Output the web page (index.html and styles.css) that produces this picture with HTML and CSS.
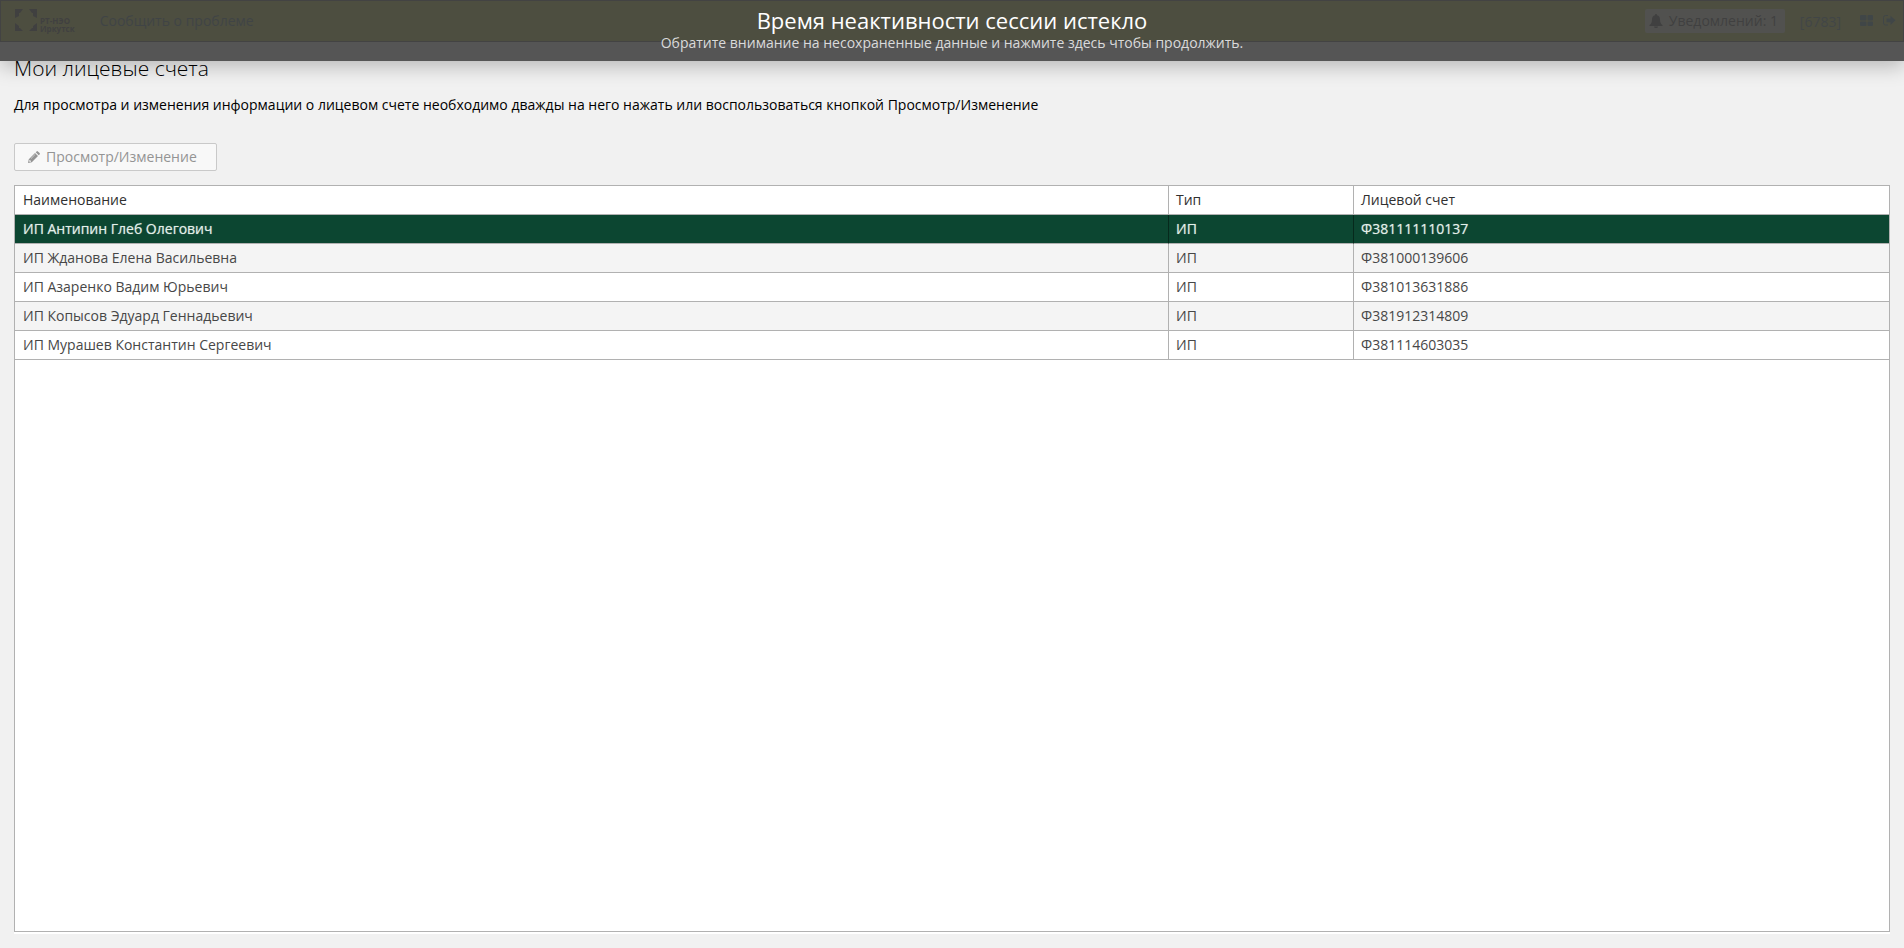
FILE: index.html
```html
<!DOCTYPE html>
<html lang="ru">
<head>
<meta charset="utf-8">
<title>Мои лицевые счета</title>
<link rel="stylesheet" href="styles.css">
</head>
<body>
<header class="topbar">
  <svg class="logo-mark" viewBox="0 0 22 23" width="22" height="23" aria-hidden="true">
    <path d="M0 0H8L5 4H4V7L0 9ZM14 0H22V9L18 7V4H17ZM0 14L4 17V19H5L8 22H0ZM22 14V22H14L17 19H18V17Z" fill="currentColor"/>
  </svg>
  <div class="logo-text"><span>РТ-НЭО</span><span>Иркутск</span></div>
  <a class="report" href="#report">Сообщить о проблеме</a>
  <button class="notices" type="button">
    <svg viewBox="0 0 14 14" width="14" height="14" aria-hidden="true"><path d="M7 0a1 1 0 0 1 1 1.200C10.200 1.700 11 3.500 11 5.500C11 8.500 12 10 13.500 11V12H.5V11C2 10 3 8.500 3 5.500C3 3.500 3.800 1.700 6 1.200A1 1 0 0 1 7 0ZM5 12.500H9A2 1.500 0 0 1 5 12.500Z" fill="currentColor"/></svg>
    <span>Уведомлений: 1</span>
  </button>
  <span class="code">[6783]</span>
  <button class="icon-button apps" type="button" aria-label="Приложения">
    <svg viewBox="0 0 14 12" width="14" height="12"><path d="M1 0H5.500Q6.500 0 6.500 1V4.500Q6.500 5.500 5.500 5.500H1Q0 5.500 0 4.500V1Q0 0 1 0ZM8.500 0H12Q13 0 13 1V4.500Q13 5.500 12 5.500H8.500Q7.500 5.500 7.500 4.500V1Q7.500 0 8.500 0ZM1 6.500H5.500Q6.500 6.500 6.500 7.500V10Q6.500 11 5.500 11H1Q0 11 0 10V7.500Q0 6.500 1 6.500ZM8.500 6.500H12Q13 6.500 13 7.500V10Q13 11 12 11H8.500Q7.500 11 7.500 10V7.500Q7.500 6.500 8.500 6.500Z" fill="currentColor"/></svg>
  </button>
  <button class="icon-button" type="button" aria-label="Выход">
    <svg viewBox="0 0 13 11" width="13" height="11"><path d="M5 .5H2.500Q.5 .5 .5 2.500V8Q.5 10 2.500 10H5" fill="none" stroke="currentColor"/><path d="M3.500 3.500H7.500V.7L12.500 5.300L7.500 10V7.200H3.500Z" fill="currentColor"/></svg>
  </button>
</header>

<main class="content">
  <h1 class="title">Мои лицевые счета</h1>
  <p class="hint">Для просмотра и изменения информации о лицевом счете необходимо дважды на него нажать или воспользоваться кнопкой Просмотр/Изменение</p>
  <button class="edit" type="button" disabled>
    <svg viewBox="0 0 12 12" width="12" height="12" aria-hidden="true"><path d="M0 12L.8 8.200L7 2L10 5L3.800 11.200ZM7.700 1.300L8.600 .4Q9.200 -.2 9.900 .4L11.600 2.100Q12.200 2.800 11.600 3.400L10.700 4.300ZM1.500 9L1.200 10.200L1.900 10.900L3 10.600V9.700H2.200V8.800ZM7 3.200L2.800 7.400L3.100 7.700L7.300 3.500Z" fill="currentColor" fill-rule="evenodd"/></svg>
    <span>Просмотр/Изменение</span>
  </button>
  <div class="grid">
    <table class="accounts">
      <colgroup><col><col class="col-type"><col class="col-account"></colgroup>
      <thead><tr><th scope="col">Наименование</th><th scope="col">Тип</th><th scope="col">Лицевой счет</th></tr></thead>
      <tbody>
        <tr class="selected"><td>ИП Антипин Глеб Олегович</td><td>ИП</td><td>Ф381111110137</td></tr>
        <tr><td>ИП Жданова Елена Васильевна</td><td>ИП</td><td>Ф381000139606</td></tr>
        <tr><td>ИП Азаренко Вадим Юрьевич</td><td>ИП</td><td>Ф381013631886</td></tr>
        <tr><td>ИП Копысов Эдуард Геннадьевич</td><td>ИП</td><td>Ф381912314809</td></tr>
        <tr><td>ИП Мурашев Константин Сергеевич</td><td>ИП</td><td>Ф381114603035</td></tr>
      </tbody>
    </table>
  </div>
</main>

<div class="session" role="alert">
  <strong class="session-title">Время неактивности сессии истекло</strong>
  <span class="session-text">Обратите внимание на несохраненные данные и нажмите здесь чтобы продолжить.</span>
</div>
</body>
</html>
```

FILE: styles.css
```css
* { box-sizing: border-box; }

body {
  margin: 0;
  height: 100vh;
  display: flex;
  flex-direction: column;
  background: #f1f1f1;
  color: #000;
  font: 400 14px/20px "Open Sans", sans-serif;
}

button { font: inherit; color: inherit; }

.topbar {
  display: flex;
  align-items: center;
  height: 42px;
  flex: none;
  padding: 0 7px 1px 14px;
  border: 1px solid #444;
  background: #9ea826;
  color: #222;
}

.logo-text {
  display: flex;
  flex-direction: column;
  margin: 9px 0 0 3px;
  font-size: 8px;
  line-height: 8px;
  font-weight: 700;
}

.report {
  margin: 0 auto 0 25px;
  color: #204a55;
  text-decoration: none;
}

.notices {
  display: flex;
  align-items: center;
  gap: 6px;
  min-width: 140px;
  height: 24px;
  padding: 0 4px;
  border: 0;
  border-radius: 2px;
  background: #c8cab4;
}

.code { margin: 2px 19px 0 15px; color: #305a62; }

.icon-button {
  display: flex;
  padding: 0;
  border: 0;
  background: none;
  color: #205a68;
}

.apps { margin-right: 9px; }

.content {
  flex: 1;
  display: flex;
  flex-direction: column;
  padding: 11px 14px 16px;
}

.title {
  margin: 0;
  font-size: 21px;
  line-height: 30px;
  font-weight: 300;
}

.hint { margin: 12px 0 28px; }

.edit {
  align-self: flex-start;
  display: flex;
  align-items: center;
  gap: 6px;
  height: 28px;
  min-width: 203px;
  padding: 0 13px;
  border: 1px solid #c9c9c9;
  border-radius: 2px;
  background: #f8f8f8;
  color: #949494;
}

.grid {
  flex: 1;
  margin-top: 14px;
  border: 1px solid #b1b1b1;
  background: #fff;
  box-shadow: 0 2px 0 #fff;
}

.accounts {
  width: 100%;
  table-layout: fixed;
  border-collapse: separate;
  border-spacing: 0;
  color: #474747;
}

.col-type { width: 185px; }
.col-account { width: 536px; }

.accounts th,
.accounts td {
  height: 29px;
  padding: 0 8px;
  border-bottom: 1px solid #b1b1b1;
  text-align: left;
  font-weight: 400;
}

.accounts th { color: #303030; }

.accounts th + th,
.accounts td + td {
  padding-left: 7px;
  border-left: 1px solid #b1b1b1;
}

.accounts tbody tr:nth-child(even) { background: #f4f4f4; }

.accounts .selected {
  background: #0c4631;
  color: #e3efe9;
  text-shadow: 0 0 1px rgba(227, 239, 233, 0.6);
}

.accounts .selected td + td { border-left-color: #06291c; }

.session {
  position: absolute;
  top: 0;
  left: 0;
  right: 0;
  display: flex;
  flex-direction: column;
  align-items: center;
  padding: 7px 16px 9px;
  background: rgba(68, 68, 68, 0.9);
  box-shadow: 0 5px 20px rgba(0, 0, 0, 0.25);
}

.session-title {
  margin-bottom: 1px;
  color: #fff;
  font-size: 22px;
  line-height: 26px;
  font-weight: 400;
}

.session-text {
  color: #dadada;
  line-height: 18px;
}
```
